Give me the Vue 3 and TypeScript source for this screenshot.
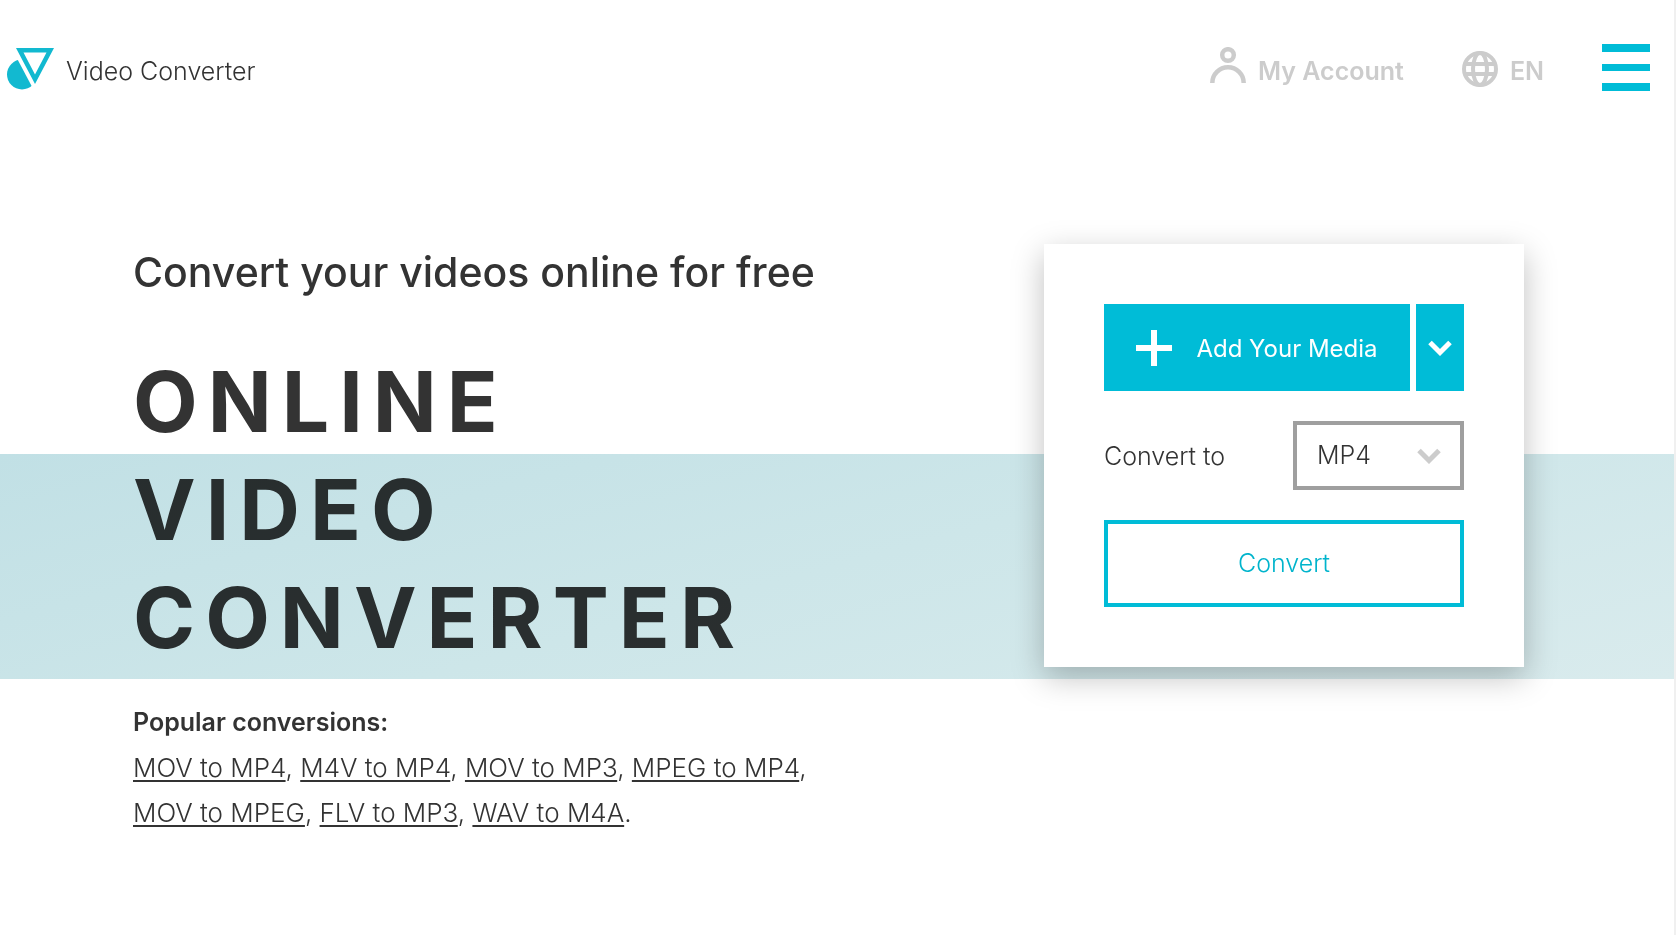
<script setup lang="ts">
import { ref } from 'vue'

const format = ref('MP4')
const formats = ['MP4', 'MP3', 'MOV', 'MPEG', 'M4A']
const conversions = [
  'MOV to MP4',
  'M4V to MP4',
  'MOV to MP3',
  'MPEG to MP4',
  'MOV to MPEG',
  'FLV to MP3',
  'WAV to M4A',
]
</script>

<template>
  <div class="page">
    <header class="header">
      <a class="brand" href="#">
        <svg class="logo" viewBox="0 0 48 44" aria-hidden="true">
          <circle cx="16" cy="27.5" r="15" fill="#12b9d0" />
          <path d="M1.800 -6L29.300 46H48V-6Z" fill="#fff" />
          <path d="M10 1H48L29 37ZM17.500 5.500L29 27.500L40.500 5.500Z" fill="#12b9d0" fill-rule="evenodd" />
        </svg>
        <span>Video Converter</span>
      </a>
      <nav class="tools">
        <a class="tool account" href="#">
          <svg class="tool-icon raised" viewBox="0 0 36 36" fill="none" stroke="currentColor" stroke-width="4.500" aria-hidden="true">
            <circle cx="18" cy="8" r="5.800" />
            <path d="M2.300 36a15.700 15.700 0 0 1 31.400 0" />
          </svg>
          <span>My Account</span>
        </a>
        <a class="tool language" href="#">
          <svg class="tool-icon" viewBox="0 0 36 36" fill="none" stroke="currentColor" stroke-width="4" aria-hidden="true">
            <circle cx="18" cy="18" r="16" />
            <ellipse cx="18" cy="18" rx="7" ry="16" />
            <path d="M3 13H33M3 23H33" />
          </svg>
          <span>EN</span>
        </a>
        <button class="menu" type="button" aria-label="Menu">
          <span></span><span></span><span></span>
        </button>
      </nav>
    </header>

    <main class="hero">
      <section class="intro">
        <p class="lead">Convert your videos online for free</p>
        <h1>Online<br />Video<br />Converter</h1>
        <h2>Popular conversions:</h2>
        <p class="links">
          <template v-for="(item, i) in conversions" :key="item"><a href="#">{{ item }}</a>{{ i < conversions.length - 1 ? ', ' : '.' }}</template>
        </p>
      </section>

      <form class="card" @submit.prevent>
        <div class="upload">
          <button class="add" type="button">
            <svg viewBox="0 0 36 36" aria-hidden="true"><path d="M18 0V36M0 18H36" stroke="currentColor" stroke-width="6" /></svg>
            <span>Add Your Media</span>
          </button>
          <button class="more" type="button" aria-label="More sources">
            <svg viewBox="0 0 24 16" fill="none" stroke="currentColor" stroke-width="5" aria-hidden="true"><path d="M2 2.500L12 12.500L22 2.500" /></svg>
          </button>
        </div>
        <div class="target">
          <label for="format">Convert to</label>
          <div class="select">
            <select id="format" v-model="format">
              <option v-for="f in formats" :key="f">{{ f }}</option>
            </select>
            <svg viewBox="0 0 24 16" fill="none" stroke="currentColor" stroke-width="5" aria-hidden="true"><path d="M2 2.500L12 12.500L22 2.500" /></svg>
          </div>
        </div>
        <button class="convert" type="submit">Convert</button>
      </form>
    </main>
  </div>
</template>

<style>
body {
  margin: 0;
  background: #fff;
}
</style>

<style scoped>
.page {
  box-sizing: border-box;
  min-height: 100vh;
  border-right: 2px solid #f0f0f0;
  background: #fff;
  color: #333;
  font-family: Inter, "Liberation Sans", sans-serif;
  font-size: 25px;
  font-weight: 300;
  line-height: 45px;
}
a {
  color: inherit;
}
button,
select {
  margin: 0;
  border: 0;
  padding: 0;
  border-radius: 0;
  font: inherit;
  cursor: pointer;
}
svg {
  display: block;
  flex: none;
}
.header {
  display: flex;
  align-items: center;
  justify-content: space-between;
  height: 134px;
  padding: 0 24px 0 6px;
}
.brand,
.tool {
  display: flex;
  align-items: center;
  text-decoration: none;
  padding-top: 8px;
}
.brand {
  gap: 12px;
}
.logo {
  width: 48px;
  height: 44px;
  margin-bottom: 4px;
}
.tools {
  display: flex;
  align-items: center;
}
.tool {
  gap: 12px;
  color: #ccc;
  font-weight: 600;
}
.tool-icon {
  width: 36px;
  height: 36px;
  margin-bottom: 4px;
}
.tool-icon.raised {
  margin-bottom: 12px;
}
.account,
.language {
  margin-right: 58px;
}
.menu {
  display: flex;
  flex-direction: column;
  gap: 12px;
  width: 48px;
  background: none;
}
.menu span {
  height: 8px;
  background: #00bcd7;
}
.menu span:nth-child(2) {
  height: 7px;
}
.hero {
  display: flex;
  align-items: flex-start;
  justify-content: space-between;
  padding: 110px 150px 60px 133px;
  background: linear-gradient(165deg, #c1e0e5, #cde6e9 50%, #d9ebed) no-repeat 0 320px / 100% 225px;
}
.intro {
  width: 700px;
  mix-blend-mode: multiply;
}
.lead {
  margin: 0;
  font-size: 41px;
  font-weight: 500;
  line-height: 56px;
}
h1 {
  margin: 48px 0 28px;
  font-size: 84px;
  font-weight: 700;
  line-height: 108px;
  letter-spacing: 10px;
  text-transform: uppercase;
}
h2 {
  margin: 0;
  font-size: 25px;
  font-weight: 600;
}
.links {
  margin: 0;
  font-size: 26px;
}
.links a {
  white-space: nowrap;
  text-decoration-thickness: 2px;
  text-underline-offset: 3px;
}
.card {
  box-sizing: border-box;
  display: flex;
  flex-direction: column;
  gap: 30px;
  flex: 0 0 480px;
  padding: 60px;
  background: #fff;
  box-shadow: 0 10px 30px rgba(0, 0, 0, 0.25);
}
.upload {
  display: flex;
  gap: 6px;
  height: 87px;
}
.upload button {
  display: flex;
  align-items: center;
  justify-content: center;
  background: #00bcd7;
  color: #fff;
}
.upload .add {
  flex: 1;
  gap: 24px;
  font-size: 24px;
  font-weight: 400;
}
.add svg {
  width: 36px;
  height: 36px;
}
.upload .more {
  width: 48px;
}
.more svg,
.select svg {
  width: 24px;
  height: 16px;
}
.target {
  display: flex;
  align-items: center;
  justify-content: space-between;
}
.select {
  position: relative;
  width: 171px;
  color: #ccc;
}
.select select {
  appearance: none;
  box-sizing: border-box;
  width: 100%;
  height: 69px;
  padding: 0 20px;
  border: 4px solid #9f9f9f;
  background: #fff;
  color: #333;
}
.select svg {
  position: absolute;
  top: 27px;
  right: 23px;
  pointer-events: none;
}
.target label,
.add span {
  padding-top: 2px;
}
.convert {
  height: 87px;
  border: 4px solid #00bcd7;
  background: #fff;
  color: #00b4cc;
}
</style>
